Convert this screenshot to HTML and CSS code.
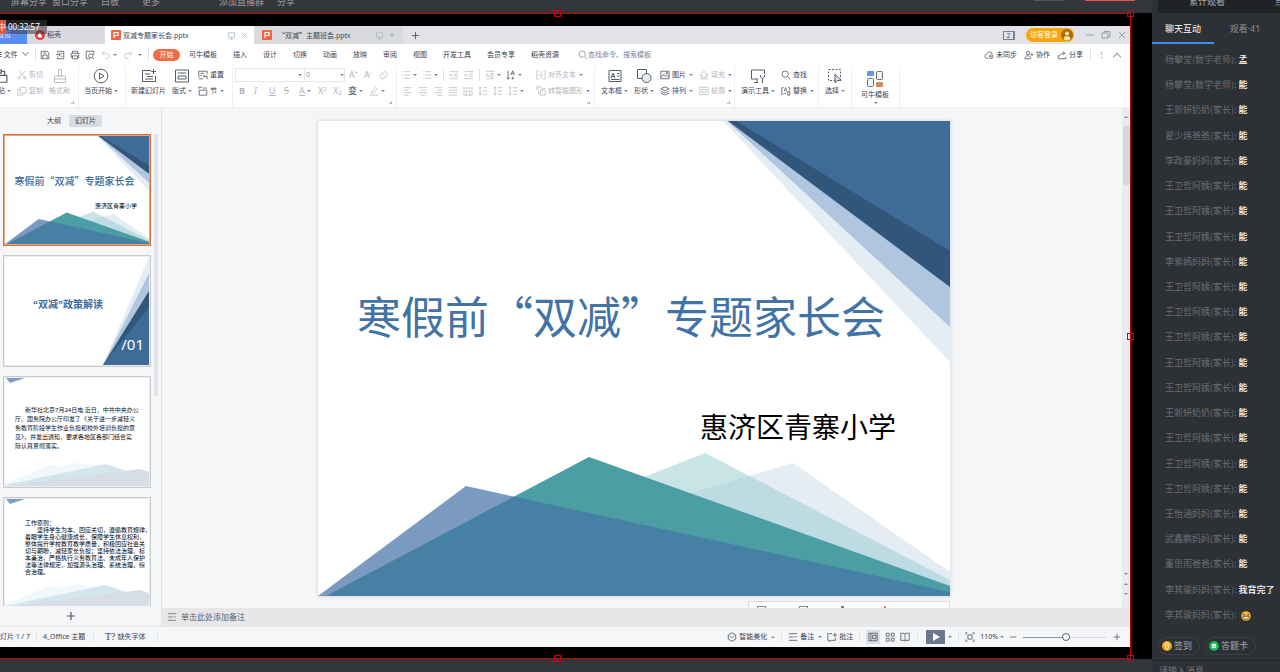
FILE: index.html
```html
<!DOCTYPE html>
<html lang="zh-CN">
<head>
<meta charset="utf-8">
<title>双减专题家长会.pptx</title>
<link rel="stylesheet" href="styles.css">
</head>
<body>
<svg class="sprite" aria-hidden="true">
  <symbol id="ppt" viewBox="0 0 10 10"><rect width="10" height="10" rx="1" fill="#ee6545"/><path d="M3 8V2.500h4v3H3" fill="none" stroke="#fff" stroke-width="1.2"/></symbol>
  <symbol id="monitor" viewBox="0 0 10 10"><path d="M1.500 2h7v5h-7zM5 7v2M3 9h4"/></symbol>
  <symbol id="close" viewBox="0 0 10 10"><path d="M2 2l6 6M8 2l-6 6"/></symbol>
  <symbol id="plus" viewBox="0 0 10 10"><path d="M5 1v8M1 5h8"/></symbol>
  <symbol id="minus" viewBox="0 0 10 10"><path d="M1 5h8"/></symbol>
  <symbol id="restore" viewBox="0 0 10 10"><path d="M1 3h6v5H1zM3 3V1.500h6v5H7"/></symbol>
  <symbol id="save" viewBox="0 0 12 12"><path d="M1.500 1.500h7l2 2v7h-9zM3.500 10V6h5v4M4 3.500h3"/></symbol>
  <symbol id="export" viewBox="0 0 12 12"><path d="M3 3V1.500h7.500v9H3V8M1 5.500h5M4.500 3.500l2 2-2 2M7 4h2M7 7.500h2"/></symbol>
  <symbol id="print" viewBox="0 0 12 12"><path d="M3 4V1.500h6V4M3 9H1.500V4h9v5H9M3 7h6v3.500H3z"/></symbol>
  <symbol id="preview" viewBox="0 0 12 12"><path d="M6 10.500H1.500v-9h9V6M9 9l2 2"/><circle cx="7" cy="7" r="2.500"/></symbol>
  <symbol id="undo" viewBox="0 0 12 12"><path d="M4 1.500L1.500 4 4 6.500M1.500 4H7a3 3 0 010 6H5"/></symbol>
  <symbol id="redo" viewBox="0 0 12 12"><path d="M8 1.500L10.500 4 8 6.500M10.500 4H5a3 3 0 000 6h2"/></symbol>
  <symbol id="search" viewBox="0 0 12 12"><circle cx="5" cy="5" r="3.800"/><path d="M8 8l3 3"/></symbol>
  <symbol id="cloud" viewBox="0 0 12 12"><path d="M5 10H3.500a2.700 2.700 0 01-.3-5.300 3.700 3.700 0 017 .3"/><circle cx="8.500" cy="8" r="2.300"/><path d="M7.500 8h2"/></symbol>
  <symbol id="person" viewBox="0 0 12 12"><circle cx="5" cy="3.500" r="2"/><path d="M1 10.500c0-5 7-5 7 0zM8 5.500h3M9.500 4v3"/></symbol>
  <symbol id="share" viewBox="0 0 12 12"><path d="M1.500 6v4.500h9V8M3 7.500c1-3 3-3.500 6-3.500M7 1.500L9.500 4 7 6.500"/></symbol>
  <symbol id="paste" viewBox="0 0 14 14"><path d="M4 3H1v9h4M4 1.500h4v3H4zM8 3h3v3M6 6.500h7v6H6z"/></symbol>
  <symbol id="cut" viewBox="0 0 12 12"><path d="M2 1l7 7M10 1L3 8"/><circle cx="2.500" cy="9.500" r="1.500"/><circle cx="9.500" cy="9.500" r="1.500"/></symbol>
  <symbol id="copy" viewBox="0 0 12 12"><path d="M4 1.500h7v7H4zM4 4H1v7h6V9"/></symbol>
  <symbol id="brush" viewBox="0 0 16 16"><path d="M6.500 1.500h3V8h-3zM2.500 8h11v3h-11zM2.500 11v3.500h11V11"/></symbol>
  <symbol id="playc" viewBox="0 0 16 16"><circle cx="8" cy="8" r="6.800"/><path d="M6.500 5v6l4.500-3z"/></symbol>
  <symbol id="newslide" viewBox="0 0 16 16"><path d="M10 2.500H1.500v11h13V8M12.500 1v5M10 3.500h5M4 6h5M6 8.500h6M4 11h8"/></symbol>
  <symbol id="layout" viewBox="0 0 16 16"><path d="M1.500 2h13v12h-13zM4 5h8M4 8h8v3H4z"/></symbol>
  <symbol id="reset" viewBox="0 0 12 12"><path d="M1 9V1.500h10V5M3 4h4M3 6.500h2M11 11V7.500H6.500M8 6L6.500 7.500 8 9M1 10.500h5"/></symbol>
  <symbol id="section" viewBox="0 0 12 12"><path d="M1 1.500h4M1 1.500v2M6 2.500h4.500M1.500 5h9v6h-9z"/></symbol>
  <symbol id="eraser" viewBox="0 0 12 12"><path d="M1 7l5.500-5.500L11 5.500 5.500 10.500h-2zM4 4.500l4 4"/></symbol>
  <symbol id="marker" viewBox="0 0 12 12"><path d="M3 7l5-5.500 2 2L5 9H3zM1 11h10" /></symbol>
  <symbol id="bullets" viewBox="0 0 12 12"><path d="M4 2h7M4 6h7M4 10h7M1 2h1M1 6h1M1 10h1"/></symbol>
  <symbol id="indent" viewBox="0 0 12 12"><path d="M1 2h10M6 5h5M6 7.500h5M1 10.500h10M4.500 6H1M2.500 4.500L1 6l1.500 1.500"/></symbol>
  <symbol id="left" viewBox="0 0 12 12"><path d="M1 2h9M1 5h6M1 8h9M1 11h6"/></symbol>
  <symbol id="center" viewBox="0 0 12 12"><path d="M1 2h10M3 5h6M1 8h10M3 11h6"/></symbol>
  <symbol id="right" viewBox="0 0 12 12"><path d="M2 2h9M5 5h6M2 8h9M5 11h6"/></symbol>
  <symbol id="justify" viewBox="0 0 12 12"><path d="M1 2h10M1 5h10M1 8h10M1 11h10"/></symbol>
  <symbol id="spread" viewBox="0 0 12 12"><path d="M1 1v3M11 1v3M1 2.500h10M1 6h10v5H1zM4 6v5M8 6v5"/></symbol>
  <symbol id="spacing" viewBox="0 0 12 12"><path d="M2.500 1v10M1 3l1.500-2L4 3M1 9l1.500 2L4 9M6 2h5M6 6h5M6 10h5"/></symbol>
  <symbol id="ab" viewBox="0 0 12 12"><path d="M1 1.500h10M1 10.500h10M1.500 8.500L3 4l1.500 4.500M7 4v4.500h2.500V4z"/></symbol>
  <symbol id="sort" viewBox="0 0 12 12"><path d="M2.500 1v10M1 9l1.500 2L4 9M6 6l2-5 2 5M6.500 4.500h3M8 8v3M6.500 9.500L8 11l1.500-1.500"/></symbol>
  <symbol id="aligntext" viewBox="0 0 12 12"><path d="M3 1H1v10h2M9 1h2v10H9M3.500 6h5M6 1.500v3M6 7.500v3"/></symbol>
  <symbol id="smart" viewBox="0 0 12 12"><path d="M4 4H1V1h5v2M3 6v3h2M5.500 5h5.500v6H5.500zM7.500 5V3H11"/></symbol>
  <symbol id="textbox" viewBox="0 0 16 16"><path d="M2 2.500h12v11H2zM4 10l2-5 2 5M4.500 8.500h3M10 5.500h2.500M10 8h2.500M4 11.500h8.500"/></symbol>
  <symbol id="shapes" viewBox="0 0 16 16"><path d="M1.500 1.500h9v9h-9z"/><circle cx="10.500" cy="10" r="4.500" fill="#e6e9ee"/></symbol>
  <symbol id="image" viewBox="0 0 12 12"><path d="M1 1.500h10v9H1zM1 9l3.500-4L7 8l1.500-1.500L11 9"/><circle cx="8.500" cy="4" r="1"/></symbol>
  <symbol id="layers" viewBox="0 0 12 12"><path d="M6 1l5 2.300-5 2.300-5-2.300zM1 6l5 2.300L11 6M1 8.500l5 2.300 5-2.300"/></symbol>
  <symbol id="fill" viewBox="0 0 12 12"><path d="M1 6l5-4.500L11 6H9v2.500H3V6zM1 10.500h10"/></symbol>
  <symbol id="outline" viewBox="0 0 12 12"><path d="M1 1.500h10v9H1zM3.500 4h5v4h-5z"/></symbol>
  <symbol id="tools" viewBox="0 0 16 16"><path d="M8 11H1.500V2h13v4M4 14.500h4M7 11v3.500M10.500 7v2l2 1.500V15M14.500 7v2l-2 1.500"/></symbol>
  <symbol id="replace" viewBox="0 0 12 12"><path d="M3 2H1v8h2M4 6l1.500-4L7 6M8 6.500V11h2.500V6.500zM8.500 2h2v3M4 9h2"/></symbol>
  <symbol id="select" viewBox="0 0 16 16"><path d="M1.500 1.500h12v11h-12z" stroke-dasharray="2 1.500"/><path d="M8 6v9l2.200-2.500H14z" fill="#dfe4ec"/></symbol>
  <symbol id="cube" viewBox="0 0 12 12"><path d="M6 1l4.500 2.500v5L6 11 1.500 8.500v-5zM3 5c2 2 4 2 6-1"/></symbol>
  <symbol id="notes" viewBox="0 0 12 12"><path d="M1 2h10M1 6h6M1 10h10M8 5l1.500 1.500L11 5"/></symbol>
  <symbol id="comment" viewBox="0 0 12 12"><path d="M6 2H1v8h2v1.500L4.500 10H10V7M9.500 1v5M7 3.500h5"/></symbol>
  <symbol id="normal" viewBox="0 0 12 12"><path d="M1 1.500h10v9H1zM3.500 1.500v9M5.500 4h4v4h-4z"/></symbol>
  <symbol id="grid" viewBox="0 0 12 12"><path d="M1.500 1.500h3.500v3.500H1.500zM7.500 1.500H11v3.500H7.500zM1.500 7.500h3.500V11H1.500zM7.500 7.500H11V11H7.500z"/></symbol>
  <symbol id="book" viewBox="0 0 12 12"><path d="M1 1.500h4l1 1 1-1h4v8.500H7l-1 1-1-1H1zM6 2.500V11"/></symbol>
  <symbol id="fit" viewBox="0 0 12 12"><path d="M1 3V1h2M9 1h2v2M11 9v2H9M3 11H1V9M3.500 3.500h5v5h-5z"/></symbol>
  <symbol id="cover" viewBox="0 0 632 475" preserveAspectRatio="none">
    <path fill="#e4ecf4" d="M405 0L632 241V0z"/><path fill="#b0c5de" d="M409 0L632 206V0z"/><path fill="#315679" d="M410 0L632 166V0z"/><path fill="#3e6b97" d="M418 0L632 130V0z"/>
    <path fill="#e4ecf4" d="M24 475L475 342l157 109v24z"/><path fill="#97cbd1" fill-opacity=".52" d="M26 475L387 332l245 127v16z"/><path fill="#4b9ea3" d="M8 475L271 336l361 129v10z"/><path fill="#4674a6" fill-opacity=".717" d="M0 475L148 365l484 106v4z"/>
  </symbol>
  <symbol id="plain" viewBox="0 0 144 108" preserveAspectRatio="none">
    <path fill="#7f9fc3" d="M1 0h19L5 5z"/><path fill="#f0f8fb" d="M0 105l45-18 12 2 12-4 40 5 35 12v6H0z"/><path fill="#d3e6ee" d="M0 107l101-21 43 15v7H0z"/><path fill="#d6dde4" d="M0 108l135-17 9 3v14z"/>
  </symbol>
</svg>

<main class="stage">
  <header class="sharebar"><span>屏幕分享</span><span>窗口分享</span><span>白板</span><span>更多</span><span class="live">添加直播群</span><span>分享</span><i class="pill-grey"></i><i class="pill-red"></i></header>
  <div class="frame">
    <i class="handle h-top"></i><i class="handle h-corner"></i><i class="handle h-side"></i><i class="handle h-low"></i><i class="handle h-bottom"></i>
    <div class="timer"><b>中</b><span>00:32:57</span></div>
    <section class="app">
      <nav class="tabs">
        <button class="tab home">首页</button>
        <button class="tab docer"><svg viewBox="0 0 10 10"><circle cx="5" cy="5" r="5" fill="#e8343c"/><path d="M5 2c-1 2-3 3-2 5 1 1 3 1 4 0 .5-2-1.500-2-2-5" fill="#fff"/></svg>稻壳</button>
        <button class="tab doc active"><svg><use href="#ppt"/></svg><span>双减专题家长会.pptx</span><svg class="ic faint"><use href="#monitor"/></svg><svg class="ic faint"><use href="#close"/></svg></button>
        <button class="tab doc"><svg><use href="#ppt"/></svg><span>“双减”主题班会.pptx</span><svg class="ic faint"><use href="#monitor"/></svg><i class="dot"></i></button>
        <button class="newtab" aria-label="新建"><svg class="ic"><use href="#plus"/></svg></button>
        <div class="winctl"><span class="count">2</span><i class="vline"></i><button class="login">访客登录<svg viewBox="0 0 12 12"><circle cx="6" cy="6" r="6" fill="#a96d0c"/><circle cx="6" cy="4.500" r="2" fill="#ffe0a0"/><path d="M2.500 10c0-4 7-4 7 0-2 2-5 2-7 0" fill="#ffe0a0"/></svg></button><i class="vline"></i><svg class="ic"><use href="#minus"/></svg><svg class="ic"><use href="#restore"/></svg><svg class="ic"><use href="#close"/></svg></div>
      </nav>
      <div class="menu">
        <button class="file">☰ 文件 <i class="chev"></i></button><i class="vline"></i>
        <div class="quick"><svg class="ic"><use href="#save"/></svg><svg class="ic"><use href="#export"/></svg><svg class="ic"><use href="#print"/></svg><svg class="ic"><use href="#preview"/></svg><span class="pair off"><svg class="ic"><use href="#undo"/></svg><i class="tri"></i></span><svg class="ic off"><use href="#redo"/></svg><i class="tri"></i></div><i class="vline"></i>
        <div class="items"><button class="on">开始</button><button>可牛模板</button><button>插入</button><button>设计</button><button>切换</button><button>动画</button><button>放映</button><button>审阅</button><button>视图</button><button>开发工具</button><button>会员专享</button><button>稻壳资源</button></div>
        <label class="find"><svg class="ic"><use href="#search"/></svg><input placeholder="查找命令、搜索模板" aria-label="查找命令"></label>
        <div class="sync"><button><svg class="ic"><use href="#cloud"/></svg>未同步</button><button><svg class="ic"><use href="#person"/></svg>协作</button><button><svg class="ic"><use href="#share"/></svg>分享</button><i class="vline"></i><span>⋮</span><i class="chev up"></i></div>
      </div>
      <div class="ribbon">
        <div class="group clip"><button class="big pastebtn"><svg class="ic"><use href="#paste"/></svg><span>粘贴<i class="tri"></i></span></button><div class="stack off"><button><svg class="ic"><use href="#cut"/></svg>剪切</button><button><svg class="ic"><use href="#copy"/></svg>复制</button></div><button class="big off"><svg class="ic"><use href="#brush"/></svg><span>格式刷</span></button><i class="corner"></i></div>
        <div class="group show"><button class="big"><svg class="ic"><use href="#playc"/></svg><span>当页开始<i class="tri"></i></span></button></div>
        <div class="group slides"><button class="big"><svg class="ic"><use href="#newslide"/></svg><span>新建幻灯片</span></button><button class="big"><svg class="ic"><use href="#layout"/></svg><span>版式<i class="tri"></i></span></button><div class="stack"><button><svg class="ic"><use href="#reset"/></svg>重置</button><button><svg class="ic"><use href="#section"/></svg>节<i class="tri"></i></button></div></div>
        <div class="group fonts"><div class="stack"><div class="row"><div class="combo"><select aria-label="字体"><option></option></select><i class="tri"></i><select class="size" aria-label="字号"><option>0</option></select><i class="tri"></i></div><span class="g off">A<sup>+</sup></span><span class="g off">A<sup>-</sup></span><svg class="ic off"><use href="#eraser"/></svg></div>
          <div class="row styles off"><b class="g">B</b><i class="g">I</i><u class="g">U</u><s class="g">S</s><span class="g"><u>A</u><i class="tri"></i></span><span class="g">X<sup>2</sup></span><span class="g">X<sub>2</sub></span><span class="g dark">变<i class="tri"></i></span><span class="g"><svg class="ic"><use href="#marker"/></svg><i class="tri"></i></span></div></div><i class="corner"></i></div>
        <div class="group para off"><div class="stack"><div class="row"><span class="g"><svg class="ic"><use href="#bullets"/></svg><i class="tri"></i></span><span class="g"><svg class="ic"><use href="#bullets"/></svg><i class="tri"></i></span><i class="vline"></i><svg class="ic"><use href="#indent"/></svg><svg class="ic"><use href="#indent"/></svg><i class="vline"></i><span class="g"><svg class="ic"><use href="#ab"/></svg><i class="tri"></i></span><span class="g dark"><svg class="ic"><use href="#sort"/></svg><i class="tri"></i></span></div>
          <div class="row"><svg class="ic"><use href="#left"/></svg><svg class="ic"><use href="#center"/></svg><svg class="ic"><use href="#right"/></svg><svg class="ic"><use href="#justify"/></svg><svg class="ic"><use href="#spread"/></svg><svg class="ic"><use href="#spacing"/></svg><svg class="ic"><use href="#spacing"/></svg><span class="g"><svg class="ic"><use href="#spacing"/></svg><i class="tri"></i></span></div></div>
          <div class="stack"><button><svg class="ic"><use href="#aligntext"/></svg>对齐文本<i class="tri"></i></button><button><svg class="ic"><use href="#smart"/></svg>转智能图形<i class="tri"></i></button></div><i class="corner"></i></div>
        <div class="group draw"><button class="big"><svg class="ic"><use href="#textbox"/></svg><span>文本框<i class="tri"></i></span></button><button class="big"><svg class="ic"><use href="#shapes"/></svg><span>形状<i class="tri"></i></span></button><div class="stack"><button><svg class="ic"><use href="#image"/></svg>图片<i class="tri"></i></button><button><svg class="ic"><use href="#layers"/></svg>排列<i class="tri"></i></button></div><div class="stack off"><button><svg class="ic"><use href="#fill"/></svg>填充<i class="tri"></i></button><button><svg class="ic"><use href="#outline"/></svg>轮廓<i class="tri"></i></button></div><i class="corner"></i></div>
        <div class="group tool"><button class="big"><svg class="ic"><use href="#tools"/></svg><span>演示工具<i class="tri"></i></span></button><div class="stack"><button><svg class="ic"><use href="#search"/></svg>查找</button><button><svg class="ic"><use href="#replace"/></svg>替换<i class="tri"></i></button></div></div>
        <div class="group pick"><button class="big"><svg class="ic"><use href="#select"/></svg><span>选择<i class="tri"></i></span></button></div>
        <div class="group keniu"><button class="big"><svg viewBox="0 0 18 18"><rect x="1" y="1" width="7" height="5" rx="1" fill="#5f97e8"/><rect x="10.500" y="1.500" width="6" height="8" rx="1" fill="#f2f2f2" stroke="#6d7079"/><rect x="1.500" y="8.500" width="6" height="8" rx="1" fill="#f2f2f2" stroke="#6d7079"/><rect x="10" y="12" width="7" height="5" rx="1" fill="#d98a58"/></svg><span>可牛模板</span><i class="tri"></i></button></div>
      </div>
      <div class="work">
        <aside class="outline">
          <div class="switch"><button>大纲</button><button class="on">幻灯片</button></div>
          <div class="thumbs">
            <article class="thumb current"><svg class="art"><use href="#cover"/></svg><h3>寒假前“双减”专题家长会</h3><p class="school">惠济区青寨小学</p></article>
            <article class="thumb second"><svg class="art" viewBox="0 0 144 108" preserveAspectRatio="none"><path fill="#e4ecf4" d="M98 108L144 0v108z"/><path fill="#b0c5de" d="M98 108L144 16v92z"/><path fill="#315679" d="M98 108L144 34v74z"/><path fill="#3e6b97" d="M98 108L144 50v58z"/></svg><h3>“双减”政策解读</h3><p class="no">/01</p></article>
            <article class="thumb news"><svg class="art"><use href="#plain"/></svg><p>新华社北京7月24日电 近日，中共中央办公<br>厅、国务院办公厅印发了《关于进一步减轻义<br>务教育阶段学生作业负担和校外培训负担的意<br>见》，并发出通知，要求各地区各部门结合实<br>际认真贯彻落实。</p></article>
            <article class="thumb rules"><svg class="art"><use href="#plain"/></svg><p>工作原则：<br>　　坚持学生为本、回应关切，遵循教育规律，<br>着眼学生身心健康成长，保障学生休息权利，<br>整体提升学校教育教学质量，积极回应社会关<br>切与期盼，减轻家长负担；坚持依法治理、标<br>本兼治，严格执行义务教育法、未成年人保护<br>法等法律规定，加强源头治理、系统治理、综<br>合治理。</p></article>
          </div>
          <button class="add" aria-label="新建幻灯片"><svg class="ic"><use href="#plus"/></svg></button>
        </aside>
        <div class="editor">
          <div class="canvas">
            <div class="desk"><article class="slide"><svg class="art"><use href="#cover"/></svg><h1>寒假前“双减”专题家长会</h1><h2>惠济区青寨小学</h2></article><div class="float"><i></i><i></i><b></b><em></em></div></div>
            <div class="scroll"><i class="tri flip"></i><i class="bar"></i><i class="tri"></i><i class="tri flip"></i><i class="tri"></i></div>
          </div>
          <div class="remark"><svg class="ic"><use href="#notes"/></svg>单击此处添加备注</div>
        </div>
      </div>
      <footer class="status">
        <span class="page">幻灯片 1 / 7</span><i class="vline"></i><span class="theme">4_Office 主题</span><i class="vline"></i><span class="lost"><span class="tee">T?</span>缺失字体</span><i class="vline"></i>
        <div class="view"><button><svg class="ic"><use href="#cube"/></svg>智能美化<i class="tri flip"></i></button><i class="vline"></i><button><svg class="ic"><use href="#notes"/></svg>备注<i class="tri"></i></button><button><svg class="ic"><use href="#comment"/></svg>批注</button><i class="vline"></i><button class="sel" aria-label="普通视图"><svg class="ic"><use href="#normal"/></svg></button><svg class="ic"><use href="#grid"/></svg><svg class="ic"><use href="#book"/></svg><i class="vline"></i><button class="play" aria-label="放映"><svg viewBox="0 0 10 10"><path d="M2 1l7 4-7 4z" fill="#fff"/></svg></button><i class="tri"></i><i class="vline"></i><svg class="ic"><use href="#fit"/></svg><span class="zoom">110%<i class="tri"></i></span><svg class="ic sm"><use href="#minus"/></svg><input type="range" min="0" max="100" value="52" aria-label="缩放"><svg class="ic sm"><use href="#plus"/></svg></div>
      </footer>
    </section>
  </div>
  <div class="base"></div>
</main>
<aside class="chat">
  <div class="total"><span>累计观看</span><span>点赞</span></div>
  <div class="chattabs"><button class="on">聊天互动</button><button class="watch">观看·41</button></div>
  <ul class="msgs">
    <li><span>杨攀莹(数学老师):</span><b>孟</b></li><li><span>杨攀莹(数学老师):</span><b>能</b></li><li><span>王新妍奶奶(家长):</span><b>能</b></li><li><span>翟少炜爸爸(家长):</span><b>能</b></li><li><span>李政豪妈妈(家长):</span><b>能</b></li><li><span>王卫哲阿姨(家长):</span><b>能</b></li><li><span>王卫哲阿姨(家长):</span><b>能</b></li><li><span>王卫哲阿姨(家长):</span><b>能</b></li><li><span>李紫嫣妈妈(家长):</span><b>能</b></li><li><span>王卫哲阿姨(家长):</span><b>能</b></li><li><span>王卫哲阿姨(家长):</span><b>能</b></li><li><span>王卫哲阿姨(家长):</span><b>能</b></li><li><span>王卫哲阿姨(家长):</span><b>能</b></li><li><span>王卫哲阿姨(家长):</span><b>能</b></li><li><span>王新妍奶奶(家长):</span><b>能</b></li><li><span>王卫哲阿姨(家长):</span><b>能</b></li><li><span>王卫哲阿姨(家长):</span><b>能</b></li><li><span>王卫哲阿姨(家长):</span><b>能</b></li><li><span>王怡涵妈妈(家长):</span><b>能</b></li><li><span>武鑫鹏妈妈(家长):</span><b>能</b></li><li><span>董思雨爸爸(家长):</span><b>能</b></li><li><span>李其骏妈妈(家长):</span><b>我背完了</b></li>
    <li><span>李其骏妈妈(家长):</span><svg class="emoji" viewBox="0 0 10 10"><circle cx="5" cy="5" r="4.800" fill="#f5b335"/><path d="M2 3.500l1.500.5M8 3.500L6.500 4" stroke="#5a3a10"/><path d="M2 5.300h6c0 4-6 4-6 0" fill="#fff" stroke="#5a3a10" stroke-width=".8"/></svg></li>
  </ul>
  <div class="acts"><button><svg viewBox="0 0 10 10"><circle cx="5" cy="5" r="5" fill="#f0a30a"/><path d="M5 8.500C2 5 2.500 2 5 2s3 3 0 6.500" fill="none" stroke="#fff"/><circle cx="5" cy="4.300" r=".8" fill="#fff"/></svg>签到</button><button><svg viewBox="0 0 10 10"><circle cx="5" cy="5" r="5" fill="#0fb457"/><rect x="2.800" y="2.800" width="4.400" height="4.400" fill="#fff"/><path d="M3.500 4.300h3M3.500 5.700h3" stroke="#0fb457" stroke-width=".5"/></svg>答题卡</button></div>
  <input class="say" placeholder="请输入消息" aria-label="消息">
</aside>
</body>
</html>
```
FILE: styles.css
```css
* { box-sizing: border-box; }
body { margin: 0; height: 100vh; display: flex; overflow: hidden; background: #2d3035; color: #3a4252; font: 7px/10px "Noto Sans", "Noto Sans CJK SC", sans-serif; }
button, input, select { font: inherit; color: inherit; background: none; border: 0; padding: 0; margin: 0; white-space: nowrap; }
h1, h2, h3, p, ul { margin: 0; padding: 0; font-weight: 400; }
svg { flex: none; width: 10px; height: 10px; display: block; }
.ic { fill: none; stroke: currentColor; stroke-width: 1; opacity: .85; }
.sprite { display: none; }
.vline { flex: none; width: 1px; height: 12px; background: #dcdfe4; }
.tri { display: inline-block; flex: none; width: 0; height: 0; border: 2px solid transparent; border-top-color: #7d8697; border-bottom: 0; margin-left: 2px; vertical-align: middle; }
.flip { transform: rotate(180deg); }
.chev { display: inline-block; width: 5px; height: 5px; border: solid #929aa7; border-width: 0 1px 1px 0; transform: rotate(45deg); margin: 0 0 2px 3px; }
.chev.up { transform: rotate(225deg); margin: 4px 0 0; width: 6px; height: 6px; }
.off { color: #b0b4bb; }

.stage { flex: 1; min-width: 0; display: flex; flex-direction: column; background: #000; }
.sharebar { flex: none; height: 13px; display: flex; gap: 7px; padding-left: 11px; background: #33363b; color: #9b9ea3; font-size: 9px; line-height: 4px; overflow: hidden; }
.sharebar span { flex: none; }
.sharebar span:nth-child(2) { margin-left: -2px; }
.sharebar span:nth-child(3) { margin-left: 6px; }
.sharebar span:nth-child(4) { margin-left: 16px; }
.sharebar .live { margin-left: 52px; }
.sharebar span:nth-child(6) { margin-left: 6px; }
.pill-grey { width: 30px; height: 1px; background: #505359; margin-left: auto; }
.pill-red { width: 50px; height: 1px; background: #e0564a; margin: 0 17px 0 14px; }
.frame { flex: 1; min-height: 0; position: relative; display: flex; margin-right: 21px; padding: 12px 0 11px; border: solid #c8000a; border-width: 1px 1px 1px 0; }
.base { flex: none; height: 13px; background: #33363b; }
.handle { position: absolute; width: 7px; height: 7px; border: 1px solid #d0000a; z-index: 2; }
.h-top { left: 49%; top: -4px; }
.h-corner { right: -4px; top: -4px; }
.h-side { right: -4px; top: 50%; margin-top: -3px; }
.h-low { right: -4px; bottom: -4px; }
.h-bottom { left: 49%; bottom: -4px; }
.timer { position: absolute; z-index: 3; left: 0; top: 6px; height: 14px; width: 47px; display: flex; align-items: center; background: rgba(60,60,65,.55); color: #fff; font-size: 8px; line-height: 14px; white-space: nowrap; }
.timer b { width: 6px; background: #e0563f; overflow: hidden; margin-right: 2px; direction: rtl; font-weight: 400; font-size: 8px; }
.app { flex: 1; min-width: 0; display: flex; flex-direction: column; background: #fff; }

.tabs { flex: none; height: 18px; display: flex; background: #e1e3e7; }
.tab { display: flex; align-items: center; gap: 2px; }
.home { width: 27px; background: #5a8cf5; color: #e8efff; direction: rtl; padding-right: 16px; }
.docer { width: 78px; background: #d9dbe0; padding-left: 8px; }
.doc { width: 149px; padding: 0 5px 0 6px; background: #d8dade; font-family: "Noto Sans CJK SC", sans-serif; margin-right: 1px; }
.doc span { flex: 1; text-align: left; }
.doc.active { background: #fff; margin: 0; }
.doc .faint { color: #a9b5c4; margin-left: 2px; width: 9px; height: 9px; }
.doc:not(.active) { padding-left: 8px; }
.doc:not(.active) span { padding-left: 4px; }
.dot { width: 4px; height: 4px; border-radius: 2px; background: #b9c2cd; margin: 0 4px; }
.newtab { margin-left: 7px; display: flex; align-items: center; }
.newtab svg { width: 9px; height: 9px; }
.winctl { margin-left: auto; display: flex; align-items: center; gap: 5px; padding-right: 2px; color: #8b94a3; }
.count { width: 12px; height: 9px; border: 1px solid #75829a; border-right-width: 2px; color: #526079; line-height: 7px; text-align: center; }
.winctl .ic { margin-right: 1px; }
.login { display: flex; align-items: center; gap: 3px; width: 48px; height: 14px; border-radius: 7px; background: #f8a60c; color: #fff; padding-left: 4px; }
.login svg { width: 12px; height: 12px; }

.menu { flex: none; height: 22px; display: flex; align-items: center; }
.file { width: 35px; text-align: left; overflow: hidden; text-indent: -4px; }
.quick { width: 112px; padding-left: 4px; display: flex; align-items: center; gap: 5px; }
.pair { display: flex; align-items: center; }
.quick .off { color: #b9bec6; margin-left: 1px; }
.quick > .tri { margin-left: 0; }
.items { display: flex; align-items: center; gap: 16px; margin-left: 4px; }
.items .on { width: 27px; height: 12px; border-radius: 6px; background: #ef6a45; color: #fff; margin-right: -7px; }
.find { display: flex; align-items: center; margin-left: 19px; color: #75839a; }
.find input { width: 90px; outline: 0; }
.find input::placeholder { color: #75839a; opacity: 1; }
.sync { margin-left: auto; display: flex; align-items: center; gap: 7px; padding-right: 10px; }
.sync button { display: flex; align-items: center; gap: 2px; }
.sync .chev { margin-left: 2px; }

.ribbon { flex: none; height: 42px; display: flex; border-bottom: 1px solid #eceef1; }
.group { flex: none; position: relative; display: flex; align-items: flex-start; padding: 2px 0 0 6px; gap: 6px; border-right: 1px solid #eef0f2; overflow: hidden; }
.corner { position: absolute; right: 4px; bottom: 3px; width: 3px; height: 3px; border: solid #aeb6c6; border-width: 0 1px 1px 0; }
.big { display: flex; flex-direction: column; align-items: center; gap: 1px; }
.big svg { width: 16px; height: 16px; }
.big span { line-height: 12px; }
.stack { display: flex; flex-direction: column; gap: 2px; }
.stack > button, .row { height: 14px; display: flex; align-items: center; }
.stack > button { gap: 2px; }
.stack > button .tri { margin-left: 1px; }
.clip { width: 79px; padding-left: 0; }
.pastebtn { width: 11px; flex: none; align-items: flex-end; }
.pastebtn svg { margin-right: 3px; }
.show { width: 47px; padding-left: 5px; }
.slides { width: 107px; padding-left: 5px; }
.fonts { width: 164px; padding-left: 2px; }
.combo { width: 110px; height: 14px; border: 1px solid #e3e5e9; display: flex; align-items: center; margin-right: 4px; }
.combo select { appearance: none; flex: 1; height: 12px; }
.combo .size { flex: none; width: 34px; border-left: 1px solid #e3e5e9; padding-left: 1px; margin-left: 2px; color: #979ba3; }
.g { flex: none; width: 15px; font-size: 9px; line-height: 12px; display: flex; align-items: center; }
.g sup, .g sub { font-size: 6px; line-height: 6px; }
.g sup { margin-bottom: 4px; }
.g sub { margin-top: 4px; }
.styles { padding-left: 4px; }
.styles .g:nth-child(5) { width: 19px; }
.styles .g:nth-child(n+8) { width: 21px; }
.dark { color: #3a4252; }
.para { width: 198px; padding-left: 4px; gap: 4px; }
.para .stack:first-child { width: 131px; }
.para .row { gap: 5px; }
.para .row + .row { padding-left: 2px; }
.para .g { width: 16px; }
.draw { width: 140px; }
.tool { width: 84px; }
.pick { width: 33px; }
.keniu { width: 48px; padding-left: 9px; }
.keniu .big svg { width: 18px; height: 18px; margin-top: 2px; }

.work { flex: 1; min-height: 0; display: flex; background: #f5f6f8; }
.outline { flex: none; width: 162px; display: flex; flex-direction: column; border-right: 1px solid #e0e3e7; }
.switch { display: flex; align-items: center; gap: 8px; padding: 7px 0 0 47px; }
.switch .on { width: 33px; height: 12px; background: #d9dde2; border-radius: 2px; }
.thumbs { flex: 1; min-height: 0; margin-top: 7px; padding-left: 3px; display: flex; flex-direction: column; gap: 9px; overflow: hidden; background: linear-gradient(#dfe2e8, #dfe2e8) 154px 0 / 4px 262px no-repeat; }
.thumb { position: relative; flex: none; width: 148px; height: 112px; border: 1px solid #c9cbce; background: #fff; outline: 1px solid #ececee; outline-offset: -2px; }
.art { position: absolute; inset: 0; width: 100%; height: 100%; }
.thumb .art { inset: 1px; width: calc(100% - 2px); height: calc(100% - 2px); }
.current { border-color: #d9713a; outline-color: #e8a57d; }
.thumb h3, .thumb p { position: relative; }
.thumb h3 { color: #3e6b9c; font-family: "Liberation Serif", "Noto Sans CJK SC", serif; font-weight: 700; font-size: 10px; line-height: 14px; }
.current h3 { font-family: "Noto Sans CJK SC", sans-serif; text-align: center; padding: 39px 5px 0 0; font-weight: 500; }
.school { font-size: 6px; color: #000; text-align: right; padding: 13px 13px 0 0; }
.second h3 { padding: 42px 0 0 29px; }
.second .no { font-size: 15px; line-height: 20px; color: #fff; text-align: right; padding: 22px 6px 0 0; }
.news p { font-size: 6px; line-height: 9px; color: #111; padding: 29px 0 0 11px; white-space: nowrap; text-indent: 10px; }
.rules p { font-size: 6px; line-height: 7px; color: #000; padding: 22px 0 0 21px; white-space: nowrap; }
.add { flex: none; height: 20px; padding-left: 66px; }
.add svg { stroke-width: 1.2; }
.editor { flex: 1; min-width: 0; display: flex; flex-direction: column; }
.canvas { flex: 1; min-height: 0; display: flex; }
.desk { flex: 1; position: relative; overflow: hidden; padding: 13px 16px 0 0; }
.slide { position: relative; width: 632px; height: 475px; margin: 0 auto; background: #fff; box-shadow: 0 0 3px 1px #d9dce0; color: #000; font-family: "Noto Sans CJK SC", sans-serif; }
.slide h1 { position: relative; color: #4173a7; font-size: 44px; line-height: 60px; padding: 164px 26px 0 0; text-align: center; white-space: nowrap; }
.slide h2 { position: relative; font-size: 28px; line-height: 40px; text-align: right; padding: 61px 54px 0 0; }
.float { position: absolute; top: 493px; left: 586px; width: 202px; height: 12px; border: 1px solid #d9dce0; background: #fff; display: flex; gap: 33px; padding: 4px 8px; }
.float i { width: 9px; height: 8px; border: 1px solid #888; }
.float b { width: 3px; height: 3px; background: #777; }
.float em { width: 2px; height: 3px; background: #ee7755; margin-left: 7px; }
.scroll { flex: none; width: 8px; background: #e9ebf0; display: flex; flex-direction: column; align-items: center; gap: 8px; padding: 8px 0 13px; }
.scroll .tri { margin: 0; }
.scroll .bar { width: 7px; height: 59px; border-radius: 3px; background: #d3d6dd; margin-bottom: auto; }
.remark { flex: none; height: 18px; display: flex; align-items: center; gap: 4px; padding-left: 5px; background: #e7e7e7; font-size: 8px; color: #596273; }

.status { flex: none; height: 21px; display: flex; align-items: center; background: #f5f6f8; border-top: 1px solid #e4e7eb; white-space: nowrap; }
.status .vline { height: 8px; }
.page { width: 36px; padding-right: 6px; display: flex; justify-content: flex-end; overflow: hidden; }
.theme { width: 56px; padding-left: 6px; }
.lost { width: 63px; padding-left: 11px; display: flex; align-items: center; }
.tee { font: 10px/10px "Liberation Serif", serif; margin-right: 2px; }
.view { margin-left: auto; display: flex; align-items: center; gap: 5px; padding-right: 9px; }
.view button { display: flex; align-items: center; gap: 2px; }
.view .sel { background: #dbe0e7; width: 14px; height: 14px; justify-content: center; }
.view .play { width: 19px; height: 14px; background: #6c7790; justify-content: center; }
.view > .vline { margin: 0 1px; }
.view > .vline:nth-child(9) { margin: 0 3px 0 2px; }
.view > .tri { margin: 0 0 0 -2px; }
.view .sm { width: 8px; height: 8px; }
.view input { appearance: none; width: 83px; height: 10px; margin: 0 2px 0 1px; background: linear-gradient(90deg, #8b93a3 52%, #d9dce2 52%) 0 5px / 100% 1px no-repeat; }
.view input::-webkit-slider-thumb { appearance: none; width: 8px; height: 8px; border: 1px solid #555d6c; border-radius: 4px; background: #fff; }

.chat { flex: none; width: 128px; display: flex; flex-direction: column; background: #2d3035; color: #a9abae; font-size: 9px; font-family: "Noto Sans CJK SC", sans-serif; }
.total { flex: none; height: 13px; margin-left: 6px; background: #202226; display: flex; padding-left: 31px; line-height: 4px; gap: 50px; overflow: hidden; white-space: nowrap; }
.chattabs { flex: none; height: 31px; display: flex; color: #8c8f93; }
.chattabs button { width: 62px; border-bottom: 2px solid transparent; padding: 2px 0 0; }
.chattabs .on { color: #fff; border-color: #3b8df0; }
.chattabs .watch { font-family: "Noto Sans", "Noto Sans CJK SC", sans-serif; }
.msgs { flex: 1; list-style: none; display: flex; flex-direction: column; justify-content: space-between; padding: 4px 0 0 13px; }
.msgs li { height: 24px; display: flex; align-items: center; gap: 2px; color: #6b6e72; white-space: nowrap; }
.msgs b { color: #fff; font-weight: 500; }
.emoji { margin-left: 2px; margin-top: 2px; }
.acts { flex: none; height: 33px; padding: 10px 0 5px 6px; display: flex; gap: 5px; }
.acts button { height: 18px; display: flex; align-items: center; gap: 2px; padding: 0 7px 0 3px; border: 1px solid #3d4045; border-radius: 9px; }
.say { flex: none; height: 12px; border-top: 1px solid #222428; padding: 8px 0 0 7px; line-height: 10px; outline: 0; }
.say::placeholder { color: #75787c; opacity: 1; }
```
